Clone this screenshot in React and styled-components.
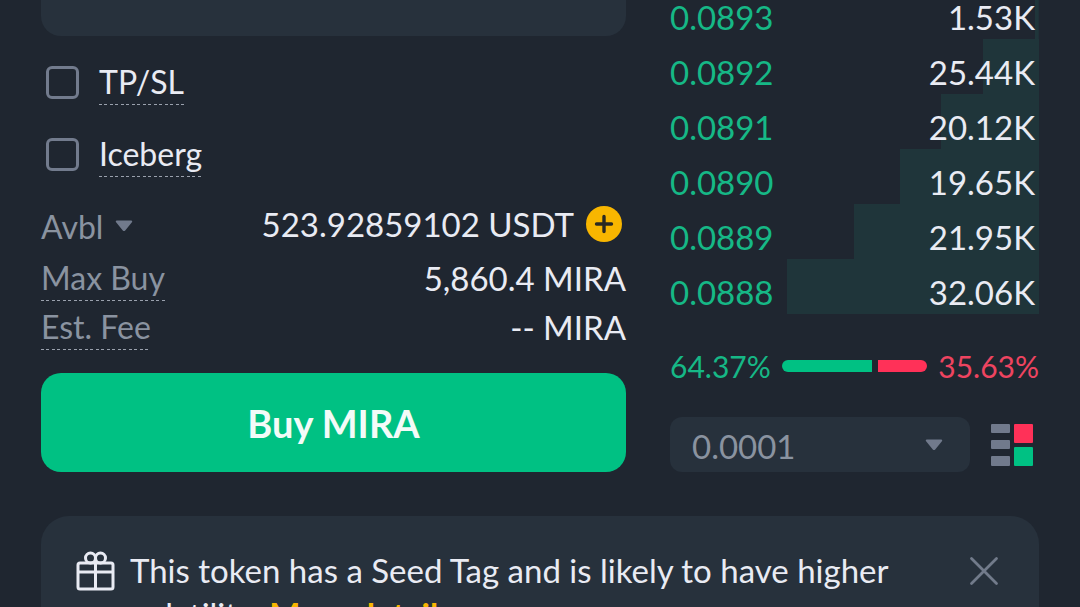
import React, { useState } from "react";
import styled, { createGlobalStyle } from "styled-components";

const bids = [
  { price: "0.0893", amount: "1.53K", depth: 1 },
  { price: "0.0892", amount: "25.44K", depth: 15.2 },
  { price: "0.0891", amount: "20.12K", depth: 26.6 },
  { price: "0.0890", amount: "19.65K", depth: 37.7 },
  { price: "0.0889", amount: "21.95K", depth: 50.2 },
  { price: "0.0888", amount: "32.06K", depth: 68.3 },
];

const buyShare = 64.37;
const sellShare = 35.63;

const CaretIcon = () => (
  <svg width="18" height="12" viewBox="0 0 18 12" aria-hidden="true">
    <path
      d="M1.8 0.5h14.4c1 0 1.3 1 .7 1.7l-6.700 8.300c-.7.8-1.700.8-2.400 0L1.100 2.200C.5 1.500.8.5 1.800.5z"
      fill="#717a8c"
    />
  </svg>
);

const GiftIcon = () => (
  <svg
    width="40"
    height="40"
    viewBox="0 0 40 40"
    fill="none"
    stroke="#e9ebf3"
    strokeWidth="3"
    aria-hidden="true"
  >
    <rect x="2" y="12" width="35" height="26" rx="2" />
    <path d="M2 21h35M19.500 10v28" />
    <circle cx="14.500" cy="7" r="5" />
    <circle cx="24.500" cy="7" r="5" />
  </svg>
);

const App = () => {
  const [tpsl, setTpsl] = useState(false);
  const [iceberg, setIceberg] = useState(false);
  const [tick, setTick] = useState("0.0001");

  return (
    <>
      <GlobalStyle />
      <Page>
        <Trade>
          <OrderForm onSubmit={(event) => event.preventDefault()}>
            <FieldPanel />
            <Options>
              <Option>
                <Checkbox
                  type="checkbox"
                  checked={tpsl}
                  onChange={() => setTpsl(!tpsl)}
                />
                <Hint>TP/SL</Hint>
              </Option>
              <Option>
                <Checkbox
                  type="checkbox"
                  checked={iceberg}
                  onChange={() => setIceberg(!iceberg)}
                />
                <Hint>Iceberg</Hint>
              </Option>
            </Options>
            <Summary>
              <SummaryRow>
                <AccountButton type="button">
                  Avbl
                  <CaretIcon />
                </AccountButton>
                <Balance>
                  523.92859102 USDT
                  <AddButton type="button" aria-label="Add funds">
                    <svg width="20" height="20" viewBox="0 0 20 20">
                      <path
                        d="M10 2.500v15M2.500 10h15"
                        stroke="#2a2a22"
                        strokeWidth="3.400"
                        strokeLinecap="round"
                      />
                    </svg>
                  </AddButton>
                </Balance>
              </SummaryRow>
              <SummaryRow>
                <Hint $muted>Max Buy</Hint>
                <span>5,860.4 MIRA</span>
              </SummaryRow>
              <SummaryRow>
                <Hint $muted>Est. Fee</Hint>
                <span>-- MIRA</span>
              </SummaryRow>
            </Summary>
            <BuyButton type="submit">Buy MIRA</BuyButton>
          </OrderForm>

          <OrderBook>
            <BidList>
              {bids.map(({ price, amount, depth }) => (
                <Bid key={price} style={{ "--depth": `${depth}%` }}>
                  <Price>{price}</Price>
                  <span>{amount}</span>
                </Bid>
              ))}
            </BidList>
            <Ratio>
              <Share $color="#16b886">{buyShare}%</Share>
              <RatioBar>
                <BuyBar style={{ flexGrow: buyShare }} />
                <SellBar style={{ flexGrow: sellShare }} />
              </RatioBar>
              <Share $color="#ee4460">{sellShare}%</Share>
            </Ratio>
            <BookControls>
              <TickField>
                <TickSelect
                  aria-label="Price step"
                  value={tick}
                  onChange={(event) => setTick(event.target.value)}
                >
                  <option>0.0001</option>
                  <option>0.001</option>
                  <option>0.01</option>
                </TickSelect>
                <CaretIcon />
              </TickField>
              <LayoutButton type="button" aria-label="Order book layout">
                <svg width="42" height="42" viewBox="0 0 42 42">
                  <g fill="#717a8c">
                    <rect y="0" width="19" height="9" rx="1" />
                    <rect y="16" width="19" height="9" rx="1" />
                    <rect y="32" width="19" height="10" rx="1" />
                  </g>
                  <rect x="23" width="19" height="19" rx="1" fill="#ff3158" />
                  <rect x="23" y="23" width="19" height="19" rx="1" fill="#00c183" />
                </svg>
              </LayoutButton>
            </BookControls>
          </OrderBook>
        </Trade>

        <Notice>
          <GiftIcon />
          <NoticeText>
            This token has a Seed Tag and is likely to have higher volatility.{" "}
            <a href="#details">More details</a>
          </NoticeText>
          <CloseButton type="button" aria-label="Close">
            <svg width="30" height="30" viewBox="0 0 30 30">
              <path
                d="M2.500 2.500l25 25M27.500 2.500l-25 25"
                stroke="#727b8b"
                strokeWidth="2.800"
                strokeLinecap="round"
              />
            </svg>
          </CloseButton>
        </Notice>
      </Page>
    </>
  );
};

const GlobalStyle = createGlobalStyle`
  * {
    box-sizing: border-box;
  }
  body {
    margin: 0;
    background: #1f2630;
    color: #e9ebf3;
    font-family: Lato, "Liberation Sans", sans-serif;
    font-size: 33px;
  }
  button,
  select {
    padding: 0;
    border: none;
    background: none;
    color: inherit;
    font: inherit;
    cursor: pointer;
  }
  svg {
    display: block;
    flex: none;
  }
`;

const Page = styled.main`
  height: 100vh;
  overflow: hidden;
  padding: 0 41px;
`;

const Trade = styled.div`
  display: grid;
  grid-template-columns: 585fr 369fr;
  gap: 44px;
`;

const OrderForm = styled.form`
  display: flex;
  flex-direction: column;
`;

const FieldPanel = styled.div`
  height: 36px;
  border-radius: 0 0 20px 20px;
  background: #27313c;
`;

const Options = styled.div`
  display: flex;
  flex-direction: column;
  align-items: flex-start;
  margin: 10px 0 9px;
`;

const Option = styled.label`
  display: flex;
  align-items: center;
  gap: 20px;
  height: 72px;
  padding-left: 5px;
  cursor: pointer;
`;

const Checkbox = styled.input`
  appearance: none;
  width: 33px;
  height: 33px;
  margin: 0;
  border: 3px solid #727b8d;
  border-radius: 6px;
  cursor: pointer;
  &:checked {
    background: #727b8d;
  }
`;

const Hint = styled.span`
  font-size: 32px;
  line-height: 46px;
  color: ${({ $muted }) => ($muted ? "#8a93a0" : "inherit")};
  background: repeating-linear-gradient(
      to right,
      #9aa1ad 0 3px,
      transparent 3px 5px,
      #9aa1ad 5px 8px,
      transparent 8px 11px
    )
    left bottom / 100% 1px no-repeat;
`;

const Summary = styled.div`
  margin-bottom: 22px;
`;

const SummaryRow = styled.div`
  display: flex;
  align-items: center;
  justify-content: space-between;
  height: 49px;
  &:first-child {
    height: 54px;
  }
`;

const AccountButton = styled.button`
  display: flex;
  align-items: center;
  gap: 12px;
  color: #8a93a0;
  font-size: 32px;
`;

const Balance = styled.div`
  display: flex;
  align-items: center;
  gap: 12px;
  padding: 0 4px 4px 0;
`;

const AddButton = styled.button`
  display: grid;
  place-items: center;
  width: 36px;
  height: 36px;
  border-radius: 50%;
  background: #f8b600;
`;

const BuyButton = styled.button`
  height: 99px;
  border-radius: 20px;
  background: #00c183;
  color: #f3fbf8;
  font-size: 38px;
  font-weight: 700;
`;

const OrderBook = styled.section`
  display: flex;
  flex-direction: column;
  justify-content: space-between;
`;

const BidList = styled.ul`
  margin: -16px 0 0;
  padding: 0;
  list-style: none;
`;

const Bid = styled.li`
  display: flex;
  align-items: center;
  justify-content: space-between;
  height: 55px;
  padding: 10px 4px 0 0;
  background: linear-gradient(#1f353a, #1f353a) right / var(--depth) 100%
    no-repeat;
`;

const Price = styled.span`
  color: #16b886;
`;

const Ratio = styled.div`
  display: flex;
  align-items: center;
  gap: 11px;
  font-size: 30px;
  line-height: 36px;
`;

const Share = styled.span`
  color: ${({ $color }) => $color};
`;

const RatioBar = styled.div`
  display: flex;
  flex: 1;
  gap: 6px;
  height: 12px;
`;

const BuyBar = styled.div`
  flex-basis: 0;
  border-radius: 6px 0 0 6px;
  background: #00c183;
`;

const SellBar = styled.div`
  flex-basis: 0;
  border-radius: 0 6px 6px 0;
  background: #ff3158;
`;

const BookControls = styled.div`
  display: flex;
  align-items: center;
  gap: 21px;
  padding-right: 6px;
`;

const TickField = styled.div`
  position: relative;
  flex: 1;
  svg {
    position: absolute;
    top: 22px;
    right: 27px;
    pointer-events: none;
  }
`;

const TickSelect = styled.select`
  appearance: none;
  display: block;
  width: 100%;
  height: 55px;
  padding: 2px 22px 0;
  border-radius: 12px;
  background: #27313c;
  color: #8a93a0;
`;

const LayoutButton = styled.button`
  flex: none;
`;

const Notice = styled.aside`
  display: flex;
  align-items: flex-start;
  margin-top: 44px;
  padding: 35px 40px;
  border-radius: 28px;
  background: #27313c;
  & > svg {
    margin-left: -5px;
  }
`;

const NoticeText = styled.p`
  flex: 1;
  margin: -3px 60px 0 14px;
  line-height: 44px;
  a {
    color: #f8b600;
    font-weight: 700;
    text-decoration: none;
  }
`;

const CloseButton = styled.button`
  padding-top: 5px;
`;

export default App;
